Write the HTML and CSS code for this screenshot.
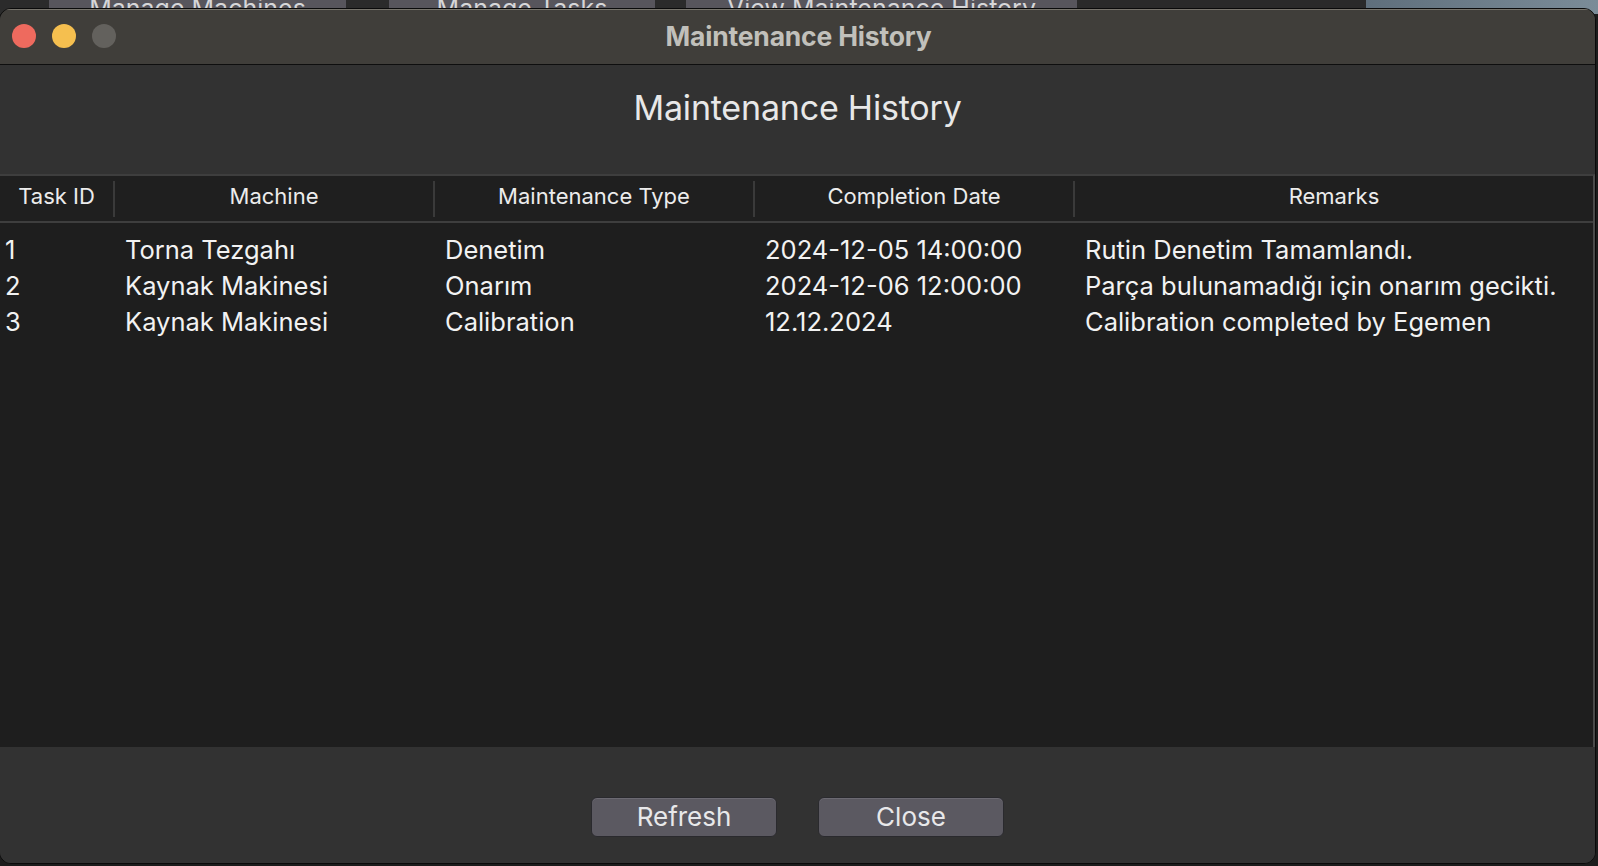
FILE: index.html
```html
<!DOCTYPE html>
<html>
<head>
<meta charset="utf-8">
<link rel="stylesheet" href="styles.css">
</head>
<body>
<div class="desktop">
  <div class="parent-strip">
    <div class="ptab t1">Manage Machines</div>
    <div class="ptab t2">Manage Tasks</div>
    <div class="ptab t3">View Maintenance History</div>
    <div class="pdark"></div>
    <div class="wallpaper"></div>
  </div>
  <div class="window">
    <div class="titlebar">
      <div class="lights">
        <span class="light red"></span>
        <span class="light yellow"></span>
        <span class="light gray"></span>
      </div>
      <div class="wtitle">Maintenance History</div>
    </div>
    <div class="content">
      <div class="heading">Maintenance History</div>
      <div class="table">
        <div class="thead">
          <div class="th c1">Task ID</div>
          <div class="th c2">Machine</div>
          <div class="th c3">Maintenance Type</div>
          <div class="th c4">Completion Date</div>
          <div class="th c5">Remarks</div>
        </div>
        <div class="tbody">
          <div class="tr">
            <div class="td c1">1</div>
            <div class="td c2">Torna Tezgahı</div>
            <div class="td c3">Denetim</div>
            <div class="td c4">2024-12-05 14:00:00</div>
            <div class="td c5">Rutin Denetim Tamamlandı.</div>
          </div>
          <div class="tr">
            <div class="td c1">2</div>
            <div class="td c2">Kaynak Makinesi</div>
            <div class="td c3">Onarım</div>
            <div class="td c4">2024-12-06 12:00:00</div>
            <div class="td c5">Parça bulunamadığı için onarım gecikti.</div>
          </div>
          <div class="tr">
            <div class="td c1">3</div>
            <div class="td c2">Kaynak Makinesi</div>
            <div class="td c3">Calibration</div>
            <div class="td c4">12.12.2024</div>
            <div class="td c5">Calibration completed by Egemen</div>
          </div>
        </div>
      </div>
      <div class="footer">
        <button class="btn">Refresh</button>
        <button class="btn">Close</button>
      </div>
    </div>
  </div>
</div>
</body>
</html>
```

FILE: styles.css
```css
html, body {
  margin: 0;
  padding: 0;
  width: 1598px;
  height: 866px;
  overflow: hidden;
  background: #1c1c1c;
  font-family: Inter, "Noto Sans", "Liberation Sans", sans-serif;
}

.desktop {
  position: relative;
  width: 1598px;
  height: 866px;
  background: #1c1c1c;
}

.parent-strip {
  display: flex;
  height: 14px;
  overflow: hidden;
  background: #2b2b2b;
}

.ptab {
  height: 14px;
  background: #57555c;
  color: #d6d6d8;
  font-size: 25px;
  line-height: 16px;
  text-align: center;
  overflow: hidden;
  box-sizing: border-box;
  white-space: nowrap;
}
.ptab.t1 { margin-left: 49px; width: 297px; }
.ptab.t2 { margin-left: 43px; width: 266px; }
.ptab.t3 { margin-left: 31px; width: 391px; }
.pdark { width: 289px; background: #2a2a2a; }
.wallpaper {
  flex: 1;
  background: linear-gradient(90deg, #5f6f7c, #7b8c98);
}

.window {
  position: absolute;
  left: -1px;
  top: 8px;
  width: 1597px;
  height: 856px;
  border-radius: 12px;
  border: 1px solid #0a0a0a;
  box-sizing: border-box;
  overflow: hidden;
  display: flex;
  flex-direction: column;
  background: #323232;
}

.titlebar {
  height: 54px;
  flex: none;
  background: #403e3a;
  border-top: 1px solid #77746c;
  border-bottom: 1px solid #0e0e0e;
  display: flex;
  align-items: center;
  position: relative;
}

.lights {
  display: flex;
  gap: 16px;
  padding-left: 12px;
  padding-bottom: 2px;
}
.light {
  width: 24px;
  height: 24px;
  border-radius: 50%;
  display: block;
}
.light.red { background: #ee6a5e; }
.light.yellow { background: #f5bf4f; }
.light.gray { background: #63615d; }

.wtitle {
  position: absolute;
  left: 0;
  right: 0;
  top: 0;
  bottom: 3px;
  display: flex;
  align-items: center;
  justify-content: center;
  color: #c1c0bb;
  font-weight: 700;
  font-size: 26.5px;
  letter-spacing: -0.2px;
  padding-left: 2px;
  pointer-events: none;
}

.content {
  flex: 1;
  display: flex;
  flex-direction: column;
  background: #323232;
}

.heading {
  height: 109px;
  box-sizing: border-box;
  padding-top: 22px;
  text-align: center;
  font-size: 34px;
  line-height: 42px;
  color: #e8e8e8;
  letter-spacing: -0.2px;
}

.table {
  height: 573px;
  display: flex;
  flex-direction: column;
  background: #1e1e1e;
  border-top: 2px solid #3e3e3e;
  border-right: 2px solid #4a4a4a;
  box-sizing: border-box;
}

.thead {
  display: flex;
  height: 45px;
  flex: none;
  align-items: center;
  border-bottom: 2px solid #3e3e3e;
  background: #1f1f1f;
}

.th {
  color: #ececec;
  font-size: 22px;
  text-align: center;
  height: 36px;
  line-height: 30px;
  box-sizing: border-box;
  border-right: 2px solid #3a3a3a;
  white-space: nowrap;
}
.th.c5 { border-right: none; }

.c1 { width: 115px; }
.c2 { width: 320px; }
.c3 { width: 320px; }
.c4 { width: 320px; }
.c5 { flex: 1; }

.tbody {
  padding-top: 8px;
  flex: 1;
}

.tr {
  display: flex;
  height: 36px;
  align-items: center;
}

.td {
  color: #f2f2f2;
  font-size: 25.5px;
  white-space: nowrap;
  padding-left: 10px;
  box-sizing: border-box;
}
.td.c1 { padding-left: 5px; }

.footer {
  flex: 1;
  display: flex;
  justify-content: center;
  align-items: flex-end;
  gap: 41px;
  padding-bottom: 26px;
}

.btn {
  width: 186px;
  height: 40px;
  background: #5b5961;
  border: 1px solid #2a2a2e;
  border-radius: 6px;
  color: #e8e8ea;
  font-family: Inter, "Noto Sans", "Liberation Sans", sans-serif;
  font-size: 26px;
  line-height: 36px;
  padding: 0;
  box-shadow: inset 0 1px 0 #6c6a72;
}
```
